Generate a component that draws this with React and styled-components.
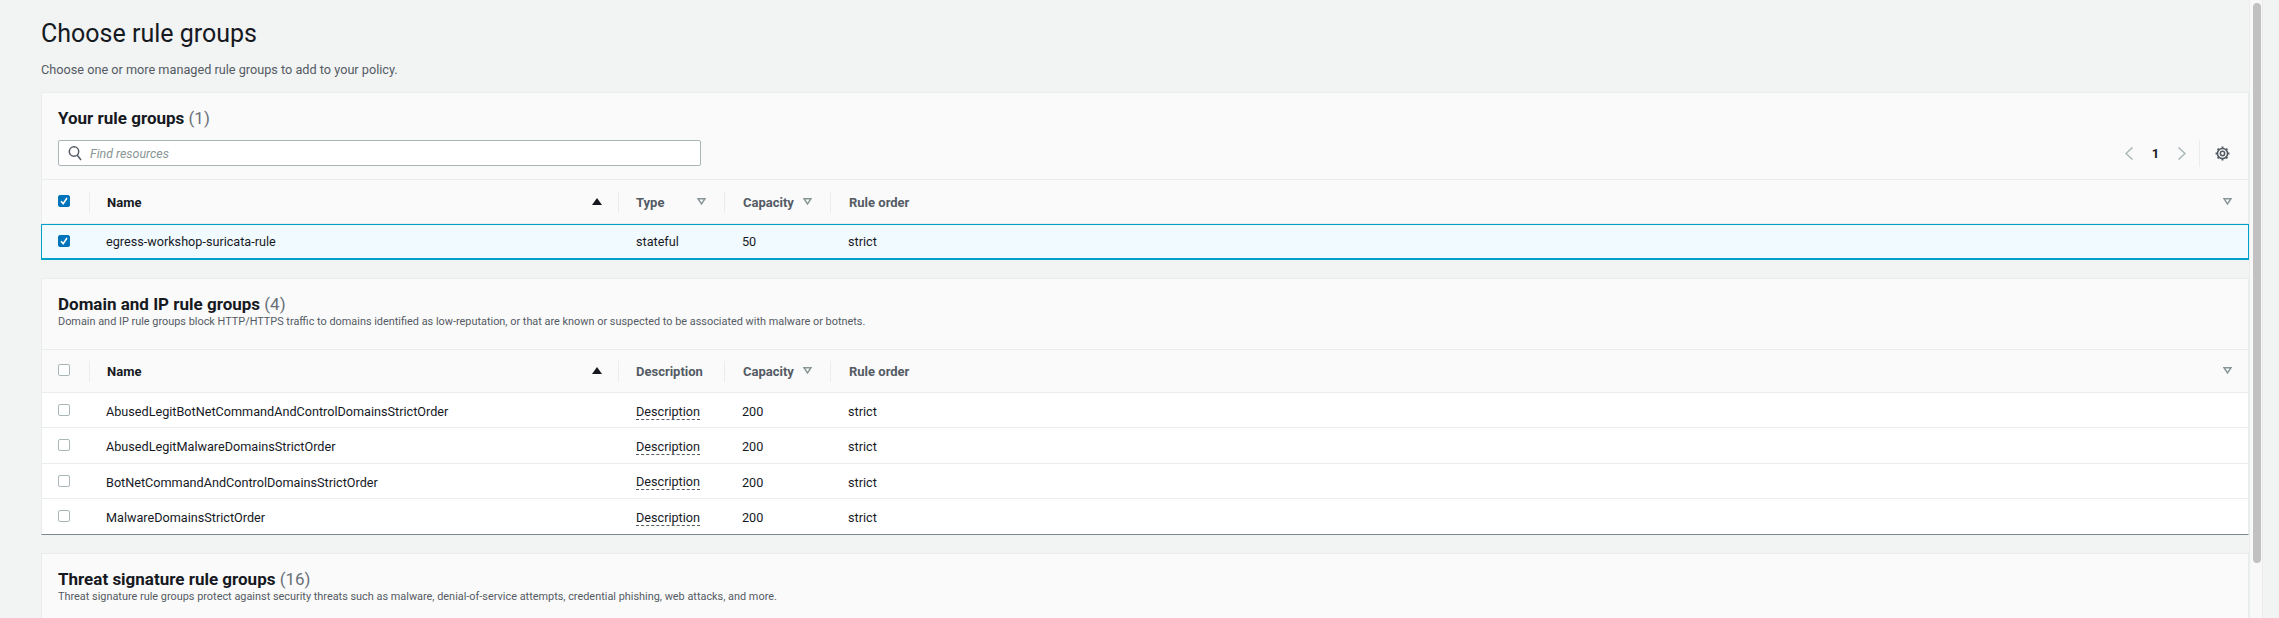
import React from "react";
import styled, { createGlobalStyle } from "styled-components";

const Global = createGlobalStyle`
  html, body { margin: 0; padding: 0; height: 618px; overflow: hidden; background: #f2f3f3; }
  body { font-family: Roboto, "Liberation Sans", sans-serif; color: #16191f; }
`;

const COLS = "47px 529px 106px 106px 1fr";

const Page = styled.div`
  display: flex;
  height: 618px;
  overflow: hidden;
  background: #f2f3f3;
`;
const Main = styled.main`
  flex: 1;
  min-width: 0;
  padding: 18px 0 0 41px;
`;
const Title = styled.h1`
  margin: 0;
  font-size: 25px;
  line-height: 32px;
  font-weight: 400;
`;
const Subtitle = styled.p`
  margin: 12px 0 0;
  font-size: 12.7px;
  line-height: 16px;
  color: #545b64;
`;
const Card = styled.section`
  margin-top: ${(p) => p.$mt}px;
  background: #fafafa;
  border-top: 1px solid #eaeded;
  border-left: 1px solid #eaeded;
  border-right: 1px solid #eaeded;
  border-bottom: ${(p) => (p.$line ? "1px solid #7b8a8e" : "none")};
`;
const CardHead = styled.header`
  padding: ${(p) => p.$pt}px 18px 0 16px;
  height: ${(p) => p.$h}px;
  box-sizing: border-box;
  border-bottom: ${(p) => (p.$noline ? "none" : "1px solid #eaeded")};
`;
const Heading = styled.h2`
  margin: 0;
  font-size: 17px;
  line-height: 22px;
  font-weight: 700;
  color: #16191f;
`;
const Count = styled.span`
  font-weight: 400;
  color: #687078;
`;
const HeadDesc = styled.p`
  margin: 0;
  font-size: 10.9px;
  line-height: 13px;
  color: #545b64;
`;
const Toolbar = styled.div`
  display: flex;
  align-items: center;
  justify-content: space-between;
  margin-top: 11px;
  height: 26px;
`;
const Search = styled.div`
  width: 643px;
  height: 26px;
  box-sizing: border-box;
  display: flex;
  align-items: center;
  gap: 8px;
  padding-left: 9px;
  background: #fff;
  border: 1px solid #aab7b8;
  border-radius: 2px;
`;
const Placeholder = styled.span`
  font-size: 12.4px;
  font-style: italic;
  color: #879596;
`;
const Pager = styled.div`
  display: flex;
  align-items: center;
  height: 26px;
`;
const PageNum = styled.span`
  width: 45px;
  text-align: center;
  font-size: 13px;
  font-weight: 700;
`;
const PagerDivider = styled.span`
  width: 1px;
  height: 27px;
  margin: 0 15px 0 13px;
  background: #eaeded;
`;
const Row = styled.div`
  display: grid;
  grid-template-columns: ${COLS};
  align-items: center;
  height: ${(p) => p.$h}px;
  box-sizing: border-box;
  font-size: 12.65px;
  background: #fff;
  padding-top: ${(p) => p.$pt ?? 0}px;
  border-bottom: ${(p) => (p.$last ? "none" : "1px solid #eaeded")};
`;
const HeaderRow = styled(Row)`
  font-size: 13px;
  background: #fafafa;
  border-bottom: 1px solid #eaeded;
  font-weight: 700;
  color: #545b64;
`;
const SelectedRow = styled(Row)`
  background: #f1faff;
  border: 1px solid #00a1c9;
  border-bottom-width: 2px;
  margin: 0 -1px;
`;
const Cell = styled.div`
  padding-left: ${(p) => p.$pl ?? 18}px;
  white-space: nowrap;
`;
const HeadCell = styled.div`
  display: flex;
  align-items: center;
  justify-content: space-between;
  height: 21px;
  padding: 0 ${(p) => p.$pr ?? 18}px 0 ${(p) => p.$pl ?? 18}px;
  white-space: nowrap;
  color: ${(p) => (p.$dark ? "#16191f" : "#545b64")};
  border-left: 1px solid #eaeded;
`;
const SelectCell = styled.div`
  padding-left: 16px;
  display: flex;
  align-items: center;
  margin-top: -3px;
`;
const SelectedBoxCell = styled(SelectCell)`
  margin-top: -1px;
`;
const SortGlyph = styled.svg`
  flex: none;
  margin-top: -3px;
`;
const Box = styled.span`
  display: flex;
  width: 12px;
  height: 12px;
  box-sizing: border-box;
  border-radius: 2px;
  background: ${(p) => (p.$on ? "#0073bb" : "#fff")};
  border: 1px solid ${(p) => (p.$on ? "#0073bb" : "#aab7b8")};
`;
const Dotted = styled.span`
  display: inline-block;
  line-height: 15px;
  border-bottom: 1px dashed #545b64;
`;
const Scrollbar = styled.div`
  flex: none;
  width: 14px;
  margin-right: 16px;
  background: #f8f8f8;
  border-left: 1px solid #eaeded;
  border-right: 1px solid #eaeded;
  padding: 3px 1px 0 3px;
  box-sizing: border-box;
`;
const Thumb = styled.div`
  height: 560px;
  border-radius: 4px;
  background: #c1c1c1;
`;

const Check = ({ on }) => (
  <Box $on={on}>
    {on && (
      <svg width="10" height="10" viewBox="0 0 10 10">
        <path d="M2 5.2 4.2 7.6 8 2" fill="none" stroke="#fff" strokeWidth="1.6" />
      </svg>
    )}
  </Box>
);
const SortUp = () => (
  <SortGlyph width="10" height="7" viewBox="0 0 10 7">
    <path d="M5 0 10 7H0Z" fill="#16191f" />
  </SortGlyph>
);
const FilterDown = () => (
  <SortGlyph width="9" height="7" viewBox="0 0 9 7">
    <path d="M1 .75H8L4.5 6Z" fill="none" stroke="#879596" strokeWidth="1.4" />
  </SortGlyph>
);
const SearchIcon = () => (
  <svg width="14" height="16" viewBox="0 0 14 16">
    <circle cx="6" cy="6.5" r="4.7" fill="none" stroke="#545b64" strokeWidth="1.5" />
    <path d="M9.3 10.3 13 15" stroke="#545b64" strokeWidth="1.5" fill="none" />
  </svg>
);
const Chevron = ({ dir }) => (
  <svg width="8" height="13" viewBox="0 0 8 13">
    <path
      d={dir === "left" ? "M7.5.5 1 6.5l6.5 6" : "M.5.5 7 6.5l-6.5 6"}
      fill="none"
      stroke="#aab7b8"
      strokeWidth="1.5"
    />
  </svg>
);
const Gear = () => (
  <svg width="15" height="15" viewBox="0 0 16 16">
    <circle cx="8" cy="8" r="2.3" fill="none" stroke="#545b64" strokeWidth="1.6" />
    <circle cx="8" cy="8" r="5.4" fill="none" stroke="#545b64" strokeWidth="1.7" />
    <path
      d="M8 .6v2.2M8 13.2v2.2M.6 8h2.2M13.2 8h2.2M2.8 2.8l1.5 1.5M11.7 11.7l1.5 1.5M2.8 13.2l1.5-1.5M11.7 4.3l1.5-1.5"
      stroke="#545b64"
      strokeWidth="2"
    />
  </svg>
);

const domainRows = [
  "AbusedLegitBotNetCommandAndControlDomainsStrictOrder",
  "AbusedLegitMalwareDomainsStrictOrder",
  "BotNetCommandAndControlDomainsStrictOrder",
  "MalwareDomainsStrictOrder",
];

const TableHeader = ({ checked, third, filterThird, h, pt }) => (
  <HeaderRow $h={h} $pt={pt}>
    <SelectCell>
      <Check on={checked} />
    </SelectCell>
    <HeadCell $dark $pl={17} $pr={16}>
      Name
      <SortUp />
    </HeadCell>
    <HeadCell $pl={17}>
      {third}
      {filterThird && <FilterDown />}
    </HeadCell>
    <HeadCell>
      Capacity
      <FilterDown />
    </HeadCell>
    <HeadCell $pr={16}>
      Rule order
      <FilterDown />
    </HeadCell>
  </HeaderRow>
);

export default function App() {
  return (
    <Page>
      <Global />
      <Main>
        <Title>Choose rule groups</Title>
        <Subtitle>Choose one or more managed rule groups to add to your policy.</Subtitle>

        <Card $mt={14}>
          <CardHead $pt={14} $h={87}>
            <Heading>
              Your rule groups <Count>(1)</Count>
            </Heading>
            <Toolbar>
              <Search>
                <SearchIcon />
                <Placeholder>Find resources</Placeholder>
              </Search>
              <Pager>
                <Chevron dir="left" />
                <PageNum>1</PageNum>
                <Chevron dir="right" />
                <PagerDivider />
                <Gear />
              </Pager>
            </Toolbar>
          </CardHead>
          <TableHeader checked third="Type" filterThird h={44} pt={2} />
          <SelectedRow $h={36}>
            <SelectedBoxCell>
              <Check on />
            </SelectedBoxCell>
            <Cell $pl={17}>egress-workshop-suricata-rule</Cell>
            <Cell>stateful</Cell>
            <Cell>50</Cell>
            <Cell>strict</Cell>
          </SelectedRow>
        </Card>

        <Card $mt={18} $line>
          <CardHead $pt={14} $h={71}>
            <Heading>
              Domain and IP rule groups <Count>(4)</Count>
            </Heading>
            <HeadDesc>
              Domain and IP rule groups block HTTP/HTTPS traffic to domains identified as low-reputation, or that are known or suspected to be associated with malware or botnets.
            </HeadDesc>
          </CardHead>
          <TableHeader third="Description" h={43} pt={1} />
          {domainRows.map((name, i) => (
            <Row key={name} $h={35.25} $pt={3} $last={i === domainRows.length - 1}>
              <SelectCell>
                <Check />
              </SelectCell>
              <Cell $pl={17}>{name}</Cell>
              <Cell>
                <Dotted>Description</Dotted>
              </Cell>
              <Cell>200</Cell>
              <Cell>strict</Cell>
            </Row>
          ))}
        </Card>

        <Card $mt={18}>
          <CardHead $pt={14} $h={80} $noline>
            <Heading>
              Threat signature rule groups <Count>(16)</Count>
            </Heading>
            <HeadDesc>
              Threat signature rule groups protect against security threats such as malware, denial-of-service attempts, credential phishing, web attacks, and more.
            </HeadDesc>
          </CardHead>
        </Card>
      </Main>
      <Scrollbar>
        <Thumb />
      </Scrollbar>
    </Page>
  );
}
